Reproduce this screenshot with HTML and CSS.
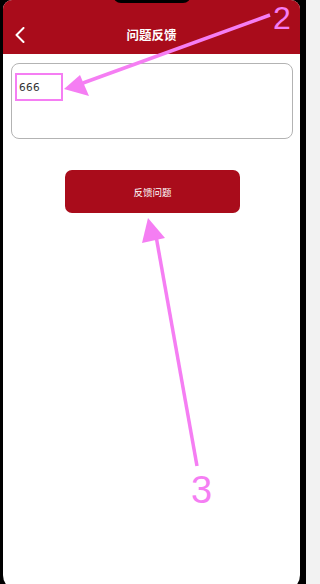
FILE: index.html
```html
<!DOCTYPE html>
<html lang="zh">
<head>
<meta charset="utf-8">
<title>问题反馈</title>
<link rel="stylesheet" href="styles.css">
</head>
<body>
<div class="device">
  <div class="screen">
    <header class="nav">
      <div class="nav-row">
        <span class="back">
          <svg width="10" height="16" viewBox="0 0 10 16"><polyline points="8.5,1 1.5,8 8.5,15" fill="none" stroke="#fff" stroke-width="2" stroke-linecap="round" stroke-linejoin="round"/></svg>
        </span>
        <h1 class="title">问题反馈</h1>
        <span class="back-spacer"></span>
      </div>
    </header>
    <main class="content">
      <div class="feedback-box">666</div>
      <button class="submit">反馈问题</button>
    </main>
  </div>
  <div class="notch"></div>
</div>
<svg class="annotations" width="308" height="584" viewBox="0 0 308 584">
  <line x1="270" y1="15" x2="83" y2="83" stroke="#f57ef3" stroke-width="3.5"/>
  <polygon points="64,89 80,75 89,96" fill="#f57ef3"/>
  <rect x="16" y="74" width="46" height="26" fill="none" stroke="#f57ef3" stroke-width="2"/>
  <line x1="197" y1="466" x2="156" y2="236" stroke="#f57ef3" stroke-width="3.5"/>
  <polygon points="148,218 142,243 165,238" fill="#f57ef3"/>
</svg>
<div class="num num2">2</div>
<div class="num num3">3</div>
</body>
</html>
```
FILE: styles.css
```css
* { box-sizing: border-box; }
html, body {
  margin: 0;
  padding: 0;
  width: 308px;
  height: 584px;
  overflow: hidden;
  background: #f2f2f2;
}
body {
  position: relative;
  font-family: "Noto Sans CJK SC", "Liberation Sans", sans-serif;
}
.device {
  width: 306px;
  height: 584px;
  background: #000;
  padding-left: 3px;
  padding-right: 6px;
  overflow: hidden;
  position: relative;
}
.screen {
  width: 297px;
  height: 591px;
  background: #fff;
  border-radius: 9px 9px 16px 16px;
  overflow: hidden;
  display: flex;
  flex-direction: column;
}
.notch {
  position: absolute;
  top: -8px;
  left: 113px;
  width: 78px;
  height: 11px;
  background: #000;
  border-radius: 0 0 8px 8px;
}
.nav {
  height: 54px;
  background: #a90c1b;
  padding-top: 16px;
}
.nav-row {
  height: 38px;
  display: flex;
  align-items: center;
  justify-content: space-between;
  padding: 0 12px 0 12px;
}
.back, .back-spacer {
  width: 20px;
  display: flex;
  align-items: center;
}
.back svg { display: block; }
.title {
  margin: 0;
  color: #fff;
  font-size: 12.5px;
  font-weight: 700;
  line-height: 16px;
}
.content {
  flex: 1;
  display: flex;
  flex-direction: column;
  padding: 9px 7px 0 8px;
}
.feedback-box {
  height: 76px;
  border: 1px solid #b3b3b3;
  border-radius: 8px;
  padding: 17px 7px;
  font-family: "DejaVu Sans", "Liberation Sans", sans-serif;
  font-size: 10.5px;
  line-height: 12px;
  color: #333;
  letter-spacing: 0.3px;
}
.submit {
  align-self: center;
  margin-top: 31px;
  margin-right: -1px;
  width: 175px;
  height: 43px;
  border: none;
  border-radius: 7px;
  background: #a90c1b;
  color: #fff;
  font-family: "Noto Sans CJK SC", "Liberation Sans", sans-serif;
  font-size: 9.5px;
  padding: 0;
}
.annotations {
  position: absolute;
  top: 0;
  left: 0;
  pointer-events: none;
}
.num {
  position: absolute;
  display: block;
  font-family: "Liberation Sans", sans-serif;
  color: #f57ef3;
  pointer-events: none;
}
.num2 {
  left: 273px;
  top: 2px;
  font-size: 32px;
  line-height: 32px;
}
.num3 {
  left: 191px;
  top: 475px;
  font-size: 38px;
  line-height: 30px;
}
```
